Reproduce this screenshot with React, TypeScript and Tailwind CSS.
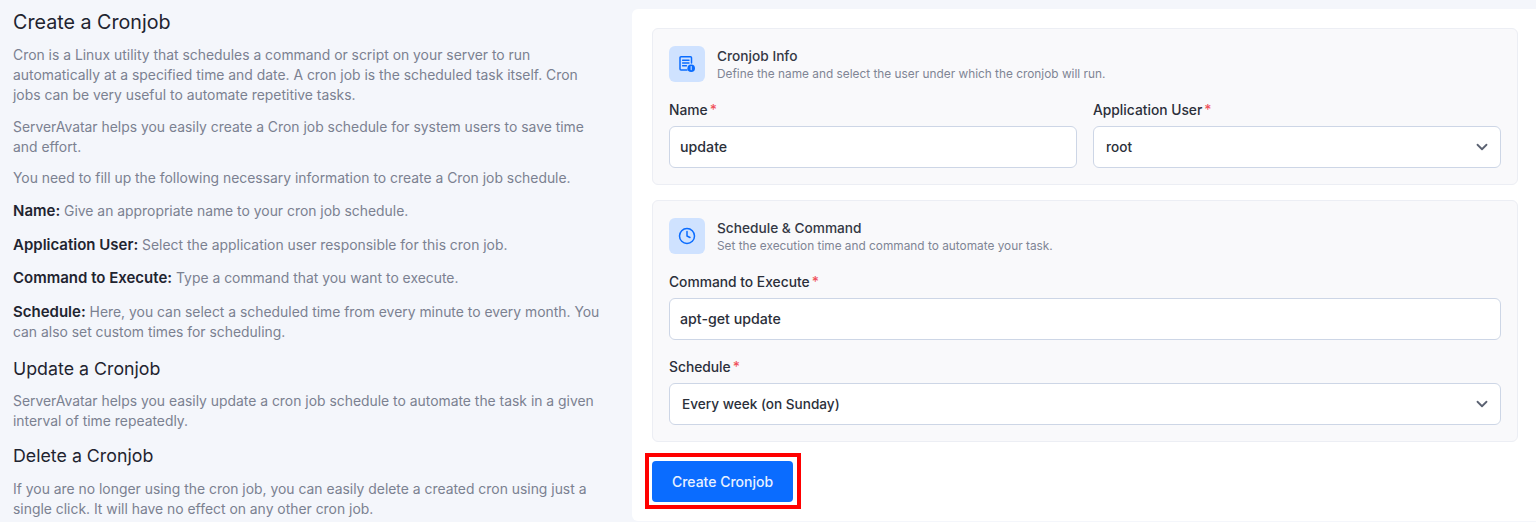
import { ChevronDown, Clock } from "lucide-react";

const FONT = "[font-family:Inter,'Noto_Sans',sans-serif]";

const CronIcon = () => (
  <svg width="18" height="18" viewBox="0 0 18 18" fill="none" className="text-[#0a6cff]">
    <path d="M13.5 8V2.8A1 1 0 0 0 12.5 1.8H3A1 1 0 0 0 2 2.8V14A1 1 0 0 0 3 15H9" stroke="currentColor" strokeWidth="1.5" strokeLinecap="round" />
    <path d="M4.6 5.2H11M4.6 8H11M4.6 10.8H8.5" stroke="currentColor" strokeWidth="1.4" strokeLinecap="round" />
    <circle cx="13.2" cy="13.2" r="3.8" fill="currentColor" />
    <path d="M13.2 11.6V14.6" stroke="#cfe2ff" strokeWidth="1.1" strokeLinecap="round" />
  </svg>
);

const Label = ({ children }: { children: string }) => (
  <label className="block h-[21px] text-[13.8px] leading-[21px] font-medium text-[#2b2f3a]">
    {children}
    <span className="ml-[2px] text-[#f0505a]">*</span>
  </label>
);

const Field = ({ value, select }: { value: string; select?: boolean }) => (
  <div
    className={
      select
        ? "mt-[5px] flex h-[42px] items-center justify-between rounded-[6px] border border-[#cdd6e6] bg-white pr-[9px] pl-[12px] text-[13.6px] font-medium text-[#2b2f3a]"
        : "mt-[5px] flex h-[42px] items-center justify-between rounded-[6px] border border-[#cdd6e6] bg-white px-[10px] text-[14.2px] font-medium text-[#2b2f3a]"
    }
  >
    <span>{value}</span>
    {select && <ChevronDown size={18} strokeWidth={2.4} className="text-[#5b6272]" />}
  </div>
);

const SectionHead = ({ icon, title, text }: { icon: JSX.Element; title: string; text: string }) => (
  <div className="flex items-center gap-[12px]">
    <div className="flex h-[36px] w-[36px] items-center justify-center rounded-[6px] bg-[#cfe2ff]">{icon}</div>
    <div className="pt-[1px]">
      <div className="text-[13.7px] leading-[20px] font-medium text-[#343844]">{title}</div>
      <div className="text-[11.85px] leading-[16px] text-[#7f8595]">{text}</div>
    </div>
  </div>
);

const Term = ({ name, children }: { name: string; children: string }) => (
  <p className="mb-[13.5px]">
    <b className="text-[15px] font-semibold text-[#1f2430]">{name}</b> {children}
  </p>
);

export default function App() {
  return (
    <div className={`${FONT} flex h-[522px] w-[1536px] overflow-hidden bg-[#f4f6fb]`}>
      <aside className="w-[632px] shrink-0 pt-[10px] pr-[30px] pl-[13px] text-[13.9px] leading-[20px] text-[#7b8191]">
        <h2 className="mb-[11px] text-[19.7px] leading-[24px] font-normal text-[#1f2430]">Create a Cronjob</h2>
        <p className="mb-[12px]">
          Cron is a Linux utility that schedules a command or script on your server to run automatically at a specified time and date. A cron job is the scheduled task itself. Cron jobs can be very useful to automate repetitive tasks.
        </p>
        <p className="mb-[11px]">
          ServerAvatar helps you easily create a Cron job schedule for system users to save time and effort.
        </p>
        <p className="mb-[13px]">You need to fill up the following necessary information to create a Cron job schedule.</p>
        <Term name="Name:">Give an appropriate name to your cron job schedule.</Term>
        <Term name="Application User:">Select the application user responsible for this cron job.</Term>
        <Term name="Command to Execute:">Type a command that you want to execute.</Term>
        <Term name="Schedule:">Here, you can select a scheduled time from every minute to every month. You can also set custom times for scheduling.</Term>
        <h3 className="mt-[15px] mb-[10px] text-[17.8px] leading-[24px] font-normal text-[#1f2430]">Update a Cronjob</h3>
        <p className="mb-[13px]">
          ServerAvatar helps you easily update a cron job schedule to automate the task in a given interval of time repeatedly.
        </p>
        <h3 className="mb-[11px] text-[17.8px] leading-[24px] font-normal text-[#1f2430]">Delete a Cronjob</h3>
        <p>
          If you are no longer using the cron job, you can easily delete a created cron using just a single click. It will have no effect on any other cron job.
        </p>
      </aside>

      <main className="mt-[9px] mb-[1px] flex-1 rounded-l-[6px] bg-white pt-[19px] pr-[18px] pl-[20px]">
        <section className="h-[157px] rounded-[6px] border border-[#eceef4] bg-[#f9f9fb] px-[16px] pt-[16px]">
          <SectionHead icon={<CronIcon />} title="Cronjob Info" text="Define the name and select the user under which the cronjob will run." />
          <div className="mt-[18px] grid grid-cols-2 gap-[16px]">
            <div>
              <Label>Name</Label>
              <Field value="update" />
            </div>
            <div>
              <Label>Application User</Label>
              <Field value="root" select />
            </div>
          </div>
        </section>

        <section className="mt-[15px] h-[242px] rounded-[6px] border border-[#eceef4] bg-[#f9f9fb] px-[16px] pt-[16px]">
          <SectionHead icon={<Clock size={18} strokeWidth={2} className="text-[#0a6cff]" />} title="Schedule & Command" text="Set the execution time and command to automate your task." />
          <div className="mt-[18px]">
            <Label>Command to Execute</Label>
            <Field value="apt-get update" />
          </div>
          <div className="mt-[17px]">
            <Label>Schedule</Label>
            <Field value="Every week (on Sunday)" select />
          </div>
        </section>

        <div className="relative mt-[19px] w-[141px]">
          <button className="h-[41px] w-[141px] rounded-[4px] bg-[#0a6cff] text-[14px] font-medium text-[#e8f1ff]">Create Cronjob</button>
          <div className="pointer-events-none absolute top-[-8px] left-[-7px] h-[56px] w-[156px] border-[4px] border-[#ff0000]" />
        </div>
      </main>
    </div>
  );
}
